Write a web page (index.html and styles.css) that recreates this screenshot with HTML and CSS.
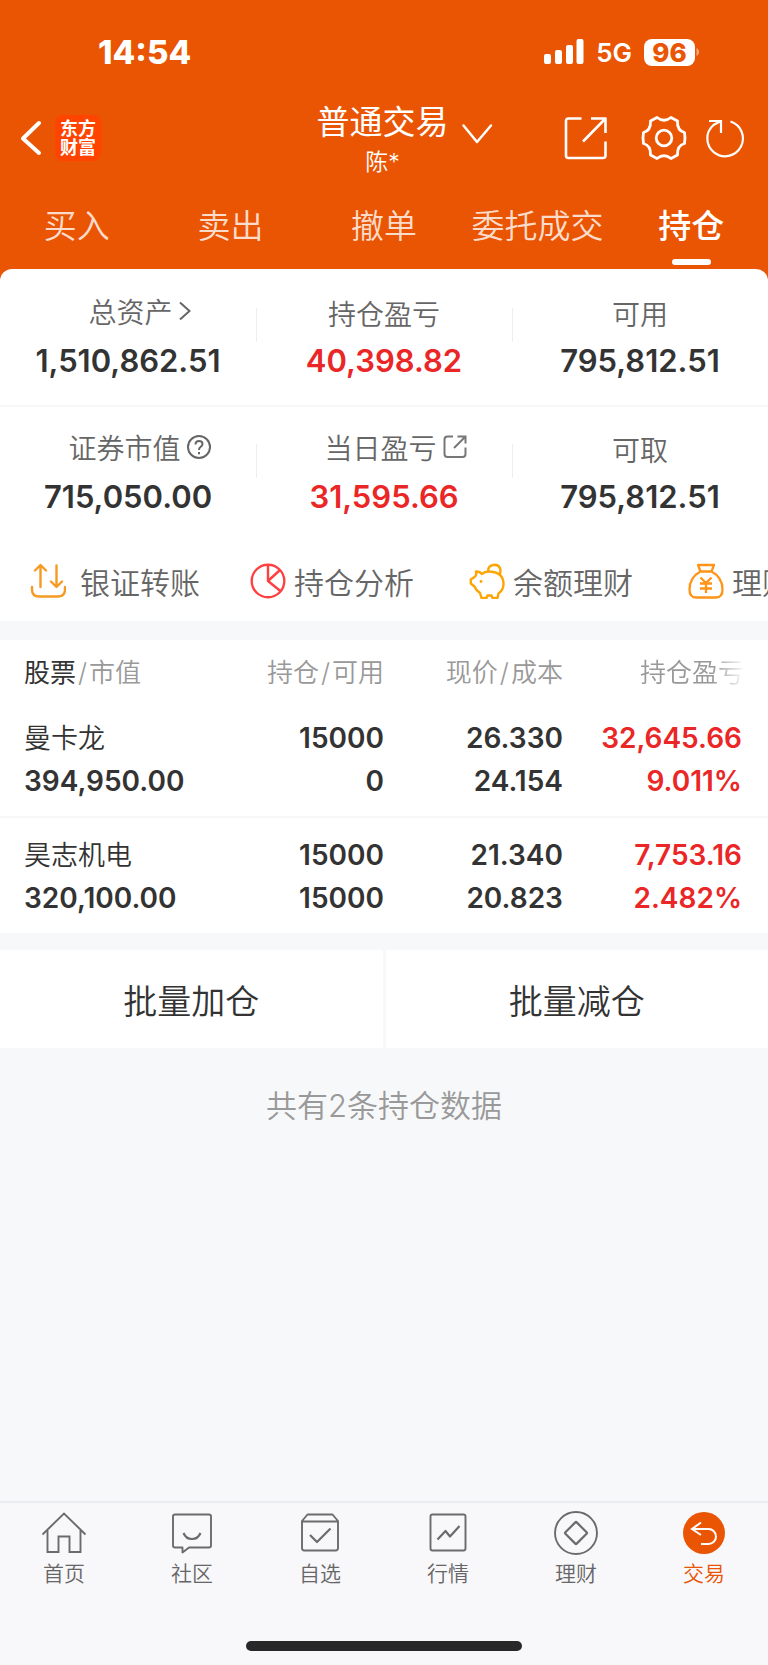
FILE: index.html
```html
<!DOCTYPE html>
<html lang="zh-CN">
<head>
<meta charset="utf-8">
<meta name="viewport" content="width=device-width, initial-scale=1">
<title>普通交易</title>
<link rel="stylesheet" href="styles.css">
</head>
<body>
<div class="app">
  <header class="header">
    <div class="status">
      <span class="status-time">14:54</span>
      <div class="status-right">
        <svg class="signal" width="40" height="26" viewBox="0 0 40 26" fill="#fff" aria-hidden="true">
          <rect x="0" y="15" width="7" height="10" rx="2"/><rect x="11" y="11" width="7" height="14" rx="2"/><rect x="22" y="6" width="7" height="19" rx="2"/><rect x="32.500" y="0" width="7" height="25" rx="2"/>
        </svg>
        <span class="network">5G</span>
        <span class="battery">96</span>
        <svg width="5" height="10" viewBox="0 0 5 10" aria-hidden="true"><path d="M1.500 1C5 2.500 5 7.500 1.500 9Z" fill="#f5a77c"/></svg>
      </div>
    </div>
    <div class="titlebar">
      <div class="titlebar-side">
        <button class="icon-btn" aria-label="返回">
          <svg width="24" height="38" viewBox="0 0 24 38" fill="none" stroke="#fff" stroke-width="4" stroke-linecap="round" stroke-linejoin="round"><path d="M20 4 4 19.500 20 34"/></svg>
        </button>
        <span class="logo">东方<br>财富</span>
      </div>
      <div class="title">
        <h1 class="title-name">普通交易</h1>
        <p class="title-user">陈*</p>
        <button class="title-toggle" aria-label="切换账户">
          <svg width="32" height="22" viewBox="0 0 32 22" fill="none" stroke="#fff" stroke-width="2.500" stroke-linecap="round" stroke-linejoin="round"><path d="M2.500 2.500 16 19 30 2.500"/></svg>
        </button>
      </div>
      <div class="titlebar-side titlebar-tools">
        <button class="icon-btn" aria-label="分享">
          <svg width="44" height="44" viewBox="0 0 44 44" fill="none" stroke="#fff" stroke-width="2.600"><path d="M17.500 2.500H4.500Q2 2.500 2 5V39.500Q2 42 4.500 42H39Q41.500 42 41.500 39.500V25.500M41.500 17V2.500H27M41.500 2.500 19 25.500" stroke-linejoin="round"/></svg>
        </button>
        <button class="icon-btn gear" aria-label="设置">
          <svg width="46" height="46" viewBox="0 0 46 46" fill="none" stroke="#fff" stroke-width="2.800" stroke-linejoin="round"><path d="M16 2.500Q23 8 30 2.500L36.500 6Q36 15.500 43.500 17.500Q44.500 23 43.500 28.500Q36 30.500 36.500 40L30 43.500Q23 38 16 43.500L9.500 40Q10 30.500 2.500 28.500Q1.500 23 2.500 17.500Q10 15.500 9.500 6Z"/><circle cx="23" cy="23" r="7.800"/></svg>
        </button>
        <button class="icon-btn" aria-label="刷新">
          <svg width="42" height="42" viewBox="0 0 42 42" fill="none" stroke="#fff" stroke-width="2.200"><path d="M26.500 4.500A17.800 17.800 0 1 1 9.500 8L16 4.500M5 4H17V16"/></svg>
        </button>
      </div>
    </div>
    <nav class="tabs" aria-label="交易">
      <a class="tab" href="#">买入</a>
      <a class="tab" href="#">卖出</a>
      <a class="tab" href="#">撤单</a>
      <a class="tab" href="#">委托成交</a>
      <a class="tab tab-active" href="#" aria-current="page">持仓</a>
    </nav>
  </header>

  <main class="main">
    <section class="summary">
      <div class="stats">
        <div class="stat">
          <span class="stat-label stat-label-icon">总资产<svg width="14" height="20" viewBox="0 0 14 20" fill="none" stroke="#666" stroke-width="2"><path d="M2 1.500 11.500 10 2 18.500"/></svg></span>
          <span class="stat-value">1,510,862.51</span>
        </div>
        <div class="stat"><span class="stat-label">持仓盈亏</span><span class="stat-value up">40,398.82</span></div>
        <div class="stat"><span class="stat-label">可用</span><span class="stat-value">795,812.51</span></div>
      </div>
      <div class="stats stats-second">
        <div class="stat">
          <span class="stat-label stat-label-icon">证券市值<svg width="26" height="26" viewBox="0 0 26 26" fill="none" stroke="#666" stroke-width="2"><circle cx="13" cy="13" r="11"/><path d="M9.500 10.500Q9.500 7 13 7 16.500 7 16.500 10 16.500 11.500 14.500 13 13 14 13 16M13 18V20.200"/></svg></span>
          <span class="stat-value">715,050.00</span>
        </div>
        <div class="stat">
          <span class="stat-label stat-label-icon">当日盈亏<svg width="26" height="26" viewBox="0 0 26 26" fill="none" stroke="#777" stroke-width="2"><path d="M11 2.500H5.500Q2.500 2.500 2.500 5.500V20Q2.500 23 5.500 23H20.500Q23.500 23 23.500 20V13.500M15.500 2.500H23.500V9.500M23.500 2.500 12 14"/></svg></span>
          <span class="stat-value up">31,595.66</span>
        </div>
        <div class="stat"><span class="stat-label">可取</span><span class="stat-value">795,812.51</span></div>
      </div>
      <div class="shortcuts">
        <a class="shortcut shortcut-wide" href="#">
          <svg width="36" height="36" viewBox="0 0 36 36" fill="none" stroke="#f59a23" stroke-width="2.400" stroke-linecap="round" stroke-linejoin="round"><path d="M10.500 24V2.500M5 7.500 10.500 2 16 7.500M26.500 2.500V23M21 18.500 26.500 24 32 18.500M2 24V26.500Q2 33.500 9 33.500H28Q35 33.500 35 26.500V24"/></svg>
          <span>银证转账</span></a>
        <a class="shortcut" href="#">
          <svg width="36" height="36" viewBox="0 0 36 36" fill="none" stroke="#ff4040" stroke-width="2.400" stroke-linejoin="round"><circle cx="18" cy="18" r="16.300"/><path d="M18 1.700V18L30 7M18 18 31 28.500"/></svg>
          <span>持仓分析</span></a>
        <a class="shortcut" href="#">
          <svg width="36" height="36" viewBox="0 0 36 36" fill="none" stroke="#fda502" stroke-width="2.400" stroke-linejoin="round"><path d="M7 8.500Q11 8.500 13 11 16 8 21 8.500 34.500 9.500 34.500 21 34.500 27 29.500 30.500L28.500 35H23.500L22.500 32.500H18.500L17.500 35H12.500L11 30Q7 27.500 5.500 23.500L1.800 20.500V16.500L5.500 14Q8 12.500 7 8.500ZM19 8.500Q19 2 25.500 1.700 31.500 2 31.500 8 31.500 10.500 30 12"/><circle cx="12" cy="18.500" r="1.400" fill="#fda502" stroke="none"/></svg>
          <span>余额理财</span></a>
        <a class="shortcut" href="#">
          <svg width="36" height="36" viewBox="0 0 36 36" fill="none" stroke="#ff9416" stroke-width="2.300" stroke-linejoin="round"><path d="M10 2H26L23.500 8.500H12.500ZM12.500 8.500C4 13 1.500 20 1.500 26.500Q1.500 34.500 8 34.500H28Q34.500 34.500 34.500 26.500C34.500 20 32 13 23.500 8.500M12.500 14.500 18 20 23.500 14.500M12 20.500H24M12 25.500H24M18 20V30"/></svg>
          <span>理财</span></a>
      </div>
    </section>

    <section class="holdings">
      <table class="table">
        <colgroup><col class="col-name"><col class="col-mid"><col class="col-mid"><col></colgroup>
        <thead>
          <tr>
            <th scope="col"><b class="sorted">股票</b><i class="slash">/</i>市值</th>
            <th scope="col">持仓<i class="slash">/</i>可用</th>
            <th scope="col">现价<i class="slash">/</i>成本</th>
            <th scope="col" class="th-fade">持仓盈亏</th>
          </tr>
        </thead>
        <tbody>
          <tr>
            <td><span class="name">曼卡龙</span><span>394,950.00</span></td>
            <td><span>15000</span><span>0</span></td>
            <td><span>26.330</span><span>24.154</span></td>
            <td class="up"><span>32,645.66</span><span>9.011%</span></td>
          </tr>
          <tr>
            <td><span class="name">昊志机电</span><span>320,100.00</span></td>
            <td><span>15000</span><span>15000</span></td>
            <td><span>21.340</span><span>20.823</span></td>
            <td class="up"><span>7,753.16</span><span>2.482%</span></td>
          </tr>
        </tbody>
      </table>
    </section>

    <div class="batch">
      <button class="batch-btn">批量加仓</button>
      <button class="batch-btn">批量减仓</button>
    </div>
    <p class="count">共有2条持仓数据</p>
  </main>

  <footer class="footer">
    <nav class="tabbar" aria-label="主导航">
      <a class="tabbar-item" href="#">
        <svg width="46" height="46" viewBox="0 0 46 46" fill="none" stroke="#6b6b6b" stroke-width="1.900"><path d="M1.500 24.500 23 3.500 44.500 24.500M6.500 20V42H17.500V26.500H28.500V42H39.500V20"/></svg>首页</a>
      <a class="tabbar-item" href="#">
        <svg width="46" height="46" viewBox="0 0 46 46" fill="none" stroke="#6b6b6b" stroke-width="1.900" stroke-linejoin="round"><path d="M6 4.500H40Q42 4.500 42 6.500V35.500Q42 37.500 40 37.500H20L13.500 42.500V37.500H6Q4 37.500 4 35.500V6.500Q4 4.500 6 4.500Z"/><path d="M14.500 23Q17 29 23 29T31.500 23" stroke-width="2.200"/></svg>社区</a>
      <a class="tabbar-item" href="#">
        <svg width="46" height="46" viewBox="0 0 46 46" fill="none" stroke="#6b6b6b" stroke-width="1.900" stroke-linejoin="round"><path d="M5 11 10.500 4.500H35.500L41 11V38Q41 40.500 38.500 40.500H7.500Q5 40.500 5 38ZM5 11.500H41"/><path d="M13 25 20 32 33.500 18.500" stroke-width="2.200"/></svg>自选</a>
      <a class="tabbar-item" href="#">
        <svg width="46" height="46" viewBox="0 0 46 46" fill="none" stroke="#6b6b6b" stroke-width="1.900" stroke-linejoin="round"><rect x="5.500" y="4.500" width="35" height="36" rx="2"/><path d="M12.500 29.500 20.500 21 25 26.500 34.500 16" stroke-width="2.200"/></svg>行情</a>
      <a class="tabbar-item" href="#">
        <svg width="46" height="46" viewBox="0 0 46 46" fill="none" stroke="#6b6b6b" stroke-width="1.900" stroke-linejoin="round"><circle cx="23" cy="23" r="21"/><rect x="15" y="15" width="16" height="16" rx="1" transform="rotate(45 23 23)" stroke-width="2.200"/></svg>理财</a>
      <a class="tabbar-item tabbar-active" href="#" aria-current="page">
        <svg width="46" height="46" viewBox="0 0 46 46" fill="none"><circle cx="23" cy="23" r="21" fill="#ea5504"/><path d="M20 12.500 11 19 20 25M11 19H27.500A7.500 7.500 0 0 1 27.500 34H20" stroke="#fff" stroke-width="2"/></svg>交易</a>
    </nav>
    <div class="home-indicator"></div>
  </footer>
</div>
</body>
</html>
```
FILE: styles.css
```css
* { box-sizing: border-box; }

body {
  margin: 0;
  background: #f7f8fa;
  color: #333;
  font-family: Inter, "Noto Sans CJK SC", sans-serif;
  font-weight: 350;
}

h1, p { margin: 0; font-weight: 350; }
a { color: inherit; text-decoration: none; }
button { margin: 0; padding: 0; border: 0; background: none; color: inherit; font: inherit; }
svg { display: block; flex: none; }

.app { display: flex; flex-direction: column; min-height: 100vh; overflow: hidden; }

/* Header */
.header { background: #ea5504; color: #fff; padding-bottom: 12px; }
.status {
  display: flex; align-items: center; justify-content: space-between;
  height: 72px; padding: 32px 68px 0 98px;
}
.status-time { font-size: 33px; font-weight: 800; }
.status-right { display: flex; align-items: center; }
.network { margin: 0 12px; font-size: 26px; font-weight: 600; }
.battery {
  width: 51px; height: 27px; border-radius: 8px; background: #fff; color: #ea5504;
  font-size: 26px; line-height: 27px; font-weight: 800; text-align: center;
}

.titlebar { display: flex; align-items: center; height: 132px; padding: 0 22px 0 19px; }
.titlebar-side { display: flex; align-items: center; flex: 1 1 0; }
.titlebar-tools { justify-content: flex-end; gap: 20px; }
.gear { margin: 0 -3px 0 13px; }
.logo {
  margin-left: 12px; width: 46px; height: 46px; padding-top: 4px; border-radius: 8px;
  background: #ff4400; font-size: 18px; line-height: 19px; font-weight: 700; text-align: center;
}
.title { position: relative; padding-top: 4px; text-align: center; }
.title-name { font-size: 33px; line-height: 40px; font-weight: 400; }
.title-user { margin-top: 4px; font-size: 23px; line-height: 32px; }
.title-toggle { position: absolute; left: 100%; top: 25px; margin-left: 12px; }

.tabs { display: grid; grid-template-columns: repeat(5, 1fr); }
.tab {
  display: flex; justify-content: center; height: 65px; padding-top: 2px;
  color: #fbdccb; font-size: 33px; line-height: 40px;
}
.tab-active { position: relative; color: #fff; font-weight: 500; }
.tab-active::after {
  content: ""; position: absolute; bottom: 4px; left: 50%; width: 39px; height: 6px;
  margin-left: -19px; border-radius: 3px; background: #fff;
}

/* Account summary */
.summary { margin-top: -12px; border-radius: 12px 12px 0 0; background: #fff; overflow: hidden; }
.stats {
  display: grid; grid-template-columns: repeat(3, 1fr);
  height: 138px; padding-top: 25px; border-bottom: 2px solid #f7f7f7;
}
.stats-second { height: 134px; padding-top: 23px; border-bottom: 0; }
.stat { position: relative; display: flex; flex-direction: column; align-items: center; }
.stat + .stat::before {
  content: ""; position: absolute; left: 0; top: 14px; width: 1px; height: 34px; background: #eee;
}
.stat-label {
  display: flex; align-items: center; height: 38px;
  color: #666; font-size: 28px;
}
.stat-label-icon { gap: 5px; padding: 0 0 4px 24px; }
.stat-value { font-size: 31px; line-height: 57px; font-weight: 600; }
.up { color: #ea2626; }

.shortcuts {
  display: flex; align-items: center; gap: 55px; height: 80px; padding-left: 30px;
  overflow-x: auto; scrollbar-width: none;
}
.shortcut {
  display: flex; align-items: center; gap: 8px; flex: none;
  color: #666; font-size: 30px; white-space: nowrap;
}
.shortcut-wide { gap: 14px; margin-right: -5px; }

/* Holdings */
.holdings { margin-top: 19px; background: #fff; }
.table { width: 100%; table-layout: fixed; border-collapse: collapse; }
.col-name { width: 26.7%; }
.col-mid { width: 23.3%; }
.table th, .table td { padding: 0; text-align: right; }
.table th { height: 61px; color: #999; font-size: 26px; font-weight: 350; white-space: nowrap; }
.table th:first-child, .table td:first-child { padding-left: 24px; text-align: left; }
.table td { padding: 16px 0 13px; font-size: 28px; font-weight: 600; }
.table td:last-child { padding-right: 26px; }
.table tbody tr + tr { border-top: 2px solid #f7f7f7; }
.table td span { display: block; height: 43px; line-height: 43px; }
.table .name { font-size: 27px; font-weight: 350; }
.sorted { color: #333; font-weight: 400; }
.slash { padding: 0 2px; font-style: normal; }
.table .th-fade {
  padding-left: 77px; text-align: left; overflow: hidden;
  mask-image: linear-gradient(to right, #000 calc(100% - 56px), transparent calc(100% - 22px));
}

.batch { display: grid; grid-template-columns: 1fr 1fr; gap: 3px; margin-top: 17px; }
.batch-btn { height: 98px; background: #fff; font-size: 34px; }
.count { padding: 38px 0; color: #999; font-size: 31px; line-height: 40px; text-align: center; }

/* Bottom navigation */
.footer { margin-top: auto; padding-bottom: 14px; border-top: 2px solid #e8edef; background: #f8f8fb; }
.tabbar { display: grid; grid-template-columns: repeat(6, 1fr); height: 138px; padding-top: 7px; }
.tabbar-item {
  display: flex; flex-direction: column; align-items: center;
  color: #666; font-size: 21px; line-height: 36px;
}
.tabbar-active { color: #ea5504; }
.home-indicator { width: 36%; height: 10px; margin: 0 auto; border-radius: 5px; background: #282828; }
```
